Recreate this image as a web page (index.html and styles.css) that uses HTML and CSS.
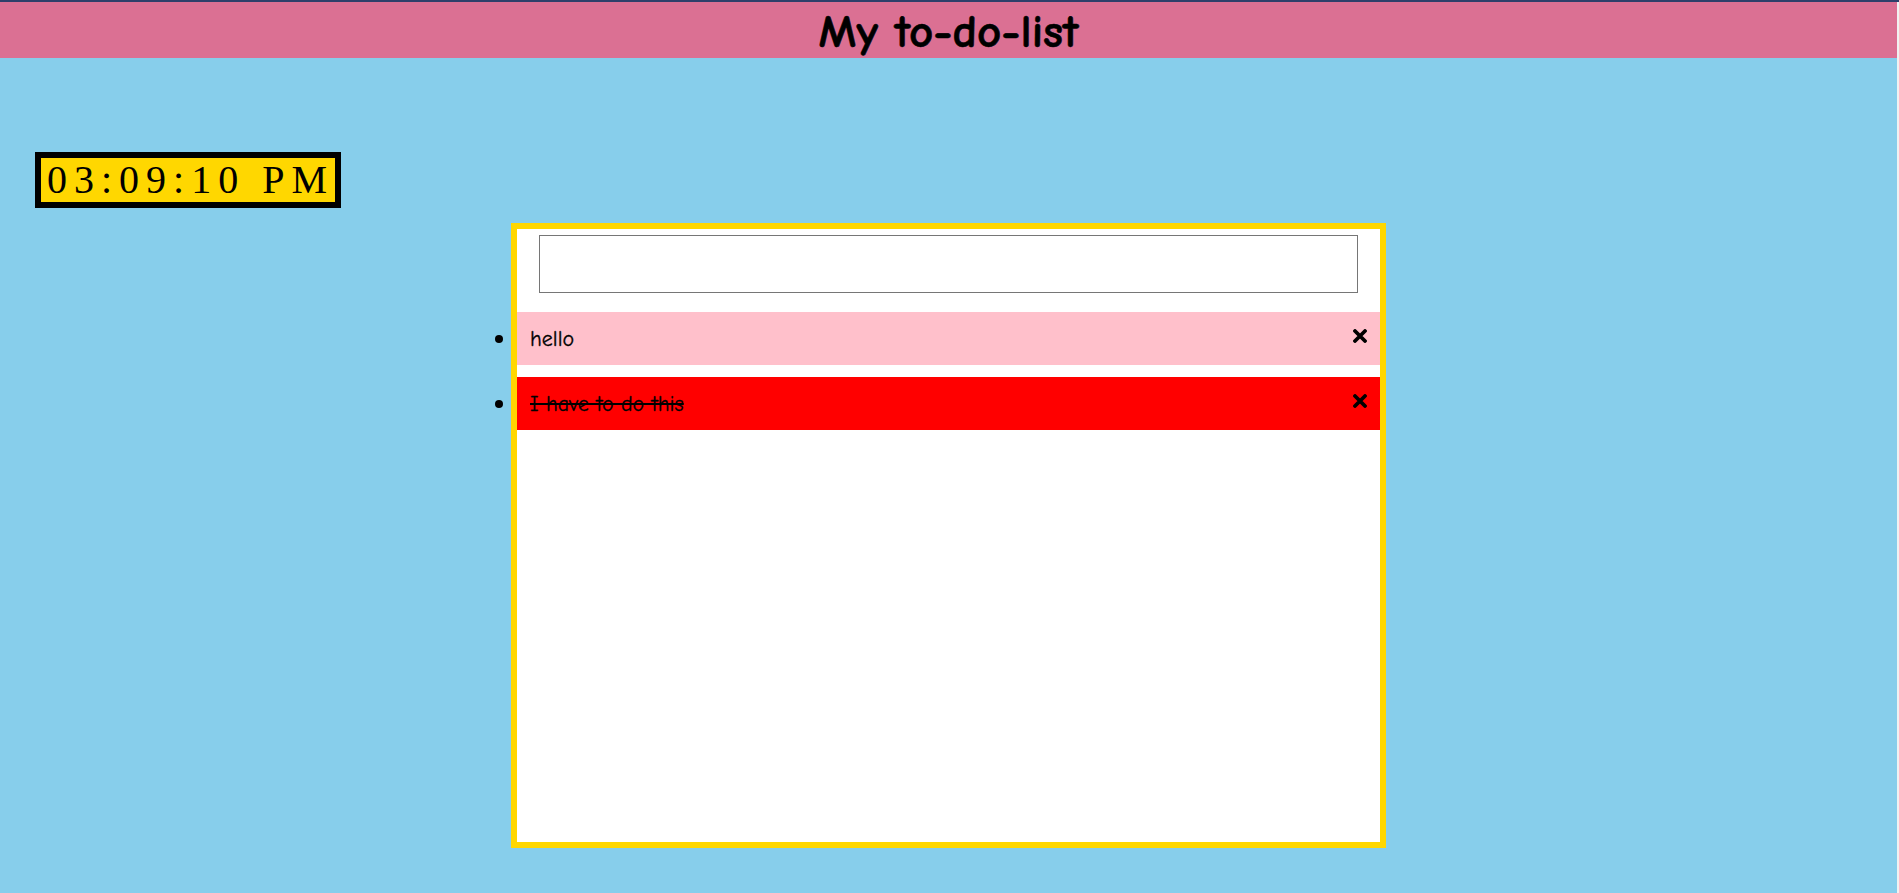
FILE: index.html
```html
<!DOCTYPE html>
<html lang="en">
<head>
<meta charset="utf-8">
<title>My to-do-list</title>
<link rel="stylesheet" href="styles.css">
</head>
<body>
<header class="top-bar">
  <h1 class="title">My to-do-list</h1>
</header>
<div class="clock">03:09:10 PM</div>
<main class="todo-box">
  <input class="todo-input" type="text">
  <ul class="todo-list">
    <li class="todo-item pending">hello<span class="remove"><svg viewBox="0 0 14 14" width="14" height="14"><path d="M2 2 L12 12 M12 2 L2 12" stroke="#000" stroke-width="3.8" stroke-linecap="round"/></svg></span></li>
    <li class="todo-item done"><span class="done-text">I have to do this</span><span class="remove"><svg viewBox="0 0 14 14" width="14" height="14"><path d="M2 2 L12 12 M12 2 L2 12" stroke="#000" stroke-width="3.8" stroke-linecap="round"/></svg></span></li>
  </ul>
</main>
</body>
</html>
```
FILE: styles.css
```css
html {
  background: #f1f1f1;
  border-top: 2px solid #2e3f6a;
}
body {
  margin: 0 2px 0 0;
  min-height: calc(100vh - 2px);
  background: #87ceeb;
  font-family: "Comic Sans MS", "Comic Neue", "Open Sans", sans-serif;
  color: #000;
  overflow: hidden;
}
.top-bar {
  height: 56px;
  background: #db7093;
  display: flex;
  align-items: center;
  justify-content: center;
}
.title {
  margin: 0;
  padding-top: 5px;
  font-size: 47px;
  font-weight: 900;
  line-height: 51px;
  -webkit-text-stroke: 0.6px #000;
}
.clock {
  display: block;
  width: 288px;
  height: 44px;
  margin: 94px 0 0 35px;
  padding-left: 6px;
  background: #ffd700;
  border: 6px solid #000;
  font-family: "Liberation Serif", "Times New Roman", serif;
  font-size: 40px;
  line-height: 44px;
  letter-spacing: 7px;
  overflow: hidden;
  white-space: nowrap;
}
.todo-box {
  display: block;
  width: 863px;
  height: 613px;
  margin: 15px auto 0;
  border: 6px solid #ffd700;
  background: #fff;
}
.todo-input {
  display: block;
  box-sizing: border-box;
  width: 95%;
  height: 58px;
  margin: 6px auto 0;
  border: 1px solid #767676;
  background: #fff;
}
.todo-list {
  margin: 19px 0 0;
  padding: 0;
  list-style: disc outside;
}
.todo-item {
  height: 53px;
  line-height: 53px;
  font-size: 22px;
  padding-left: 13px;
  margin-bottom: 12px;
  -webkit-text-stroke: 0.3px #000;
}
.todo-item::marker {
  font-size: 26px;
}
.pending {
  background: #ffc0cb;
}
.done {
  background: #ff0000;
}
.done-text {
  text-decoration: line-through;
  text-decoration-thickness: 2px;
}
.remove {
  float: right;
  width: 14px;
  height: 14px;
  margin: 16px 13px 0 0;
  line-height: 0;
}
```
